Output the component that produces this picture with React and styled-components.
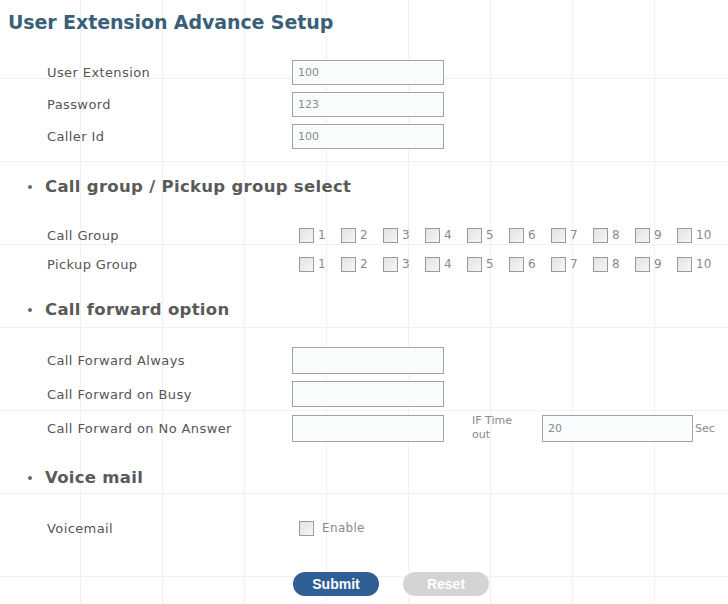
import React from "react";
import styled, { createGlobalStyle } from "styled-components";

const Global = createGlobalStyle`
  html, body { margin: 0; padding: 0; background: #fff; }
  body {
    font-family: "DejaVu Sans", Verdana, sans-serif;
    width: 728px; height: 604px; overflow: hidden;
  }
`;

const Page = styled.div`
  width: 728px;
  height: 604px;
  box-sizing: border-box;
  padding: 10px 0 0 8px;
  background-color: #fff;
  background-image:
    linear-gradient(to right, #f1f1f1 1px, transparent 1px),
    linear-gradient(to bottom, #f1f1f1 1px, transparent 1px);
  background-size: 82px 83px;
  background-position: -2px -5px;
`;

const Title = styled.h1`
  margin: 0;
  font-family: "DejaVu Sans", Verdana, sans-serif;
  font-weight: bold;
  font-size: 19px;
  line-height: 24px;
  color: #3a5f79;
  letter-spacing: -0.1px;
`;

const Section = styled.section`
  margin-top: ${(p) => p.$top}px;
`;

const Heading = styled.h2`
  margin: 0 0 0 20px;
  display: flex;
  align-items: center;
  font-family: "DejaVu Sans", Verdana, sans-serif;
  font-weight: bold;
  font-size: 16.5px;
  letter-spacing: 0.3px;
  line-height: 22px;
  color: #5a5a5a;
  &::before {
    content: "";
    width: 4px;
    height: 4px;
    border-radius: 50%;
    background: #6a6a6a;
    margin-right: 13px;
  }
`;

const Rows = styled.div`
  margin-top: ${(p) => p.$top}px;
  display: flex;
  flex-direction: column;
  gap: ${(p) => p.$gap}px;
`;

const Row = styled.div`
  display: grid;
  grid-template-columns: 245px auto;
  align-items: center;
  padding-left: 39px;
  min-height: ${(p) => p.$h || 25}px;
`;

const Label = styled.div`
  font-size: 13px;
  letter-spacing: 0.4px;
  color: #555;
`;

const Field = styled.div`
  display: flex;
  align-items: center;
`;

const TextInput = styled.input`
  box-sizing: border-box;
  width: ${(p) => p.$w || 152}px;
  height: ${(p) => p.$h || 25}px;
  border: 1px solid #a3a3a3;
  background: #f9fcfd;
  padding: 0 5px;
  font-family: "DejaVu Sans", Verdana, sans-serif;
  font-size: 11px;
  color: #8a8a8a;
  outline: none;
`;

const Checks = styled.div`
  display: flex;
  align-items: center;
  padding-left: 7px;
`;

const CheckItem = styled.label`
  display: flex;
  align-items: center;
  width: 42px;
  font-size: 12px;
  color: #8a8a8a;
`;

const Box = styled.span`
  box-sizing: border-box;
  width: 15px;
  height: 15px;
  border: 1px solid #9a9a9a;
  background: linear-gradient(135deg, #e2e2e2, #f7f7f7);
  margin-right: 4px;
  flex: none;
`;

const TimeoutLabel = styled.div`
  width: 44px;
  margin-left: 28px;
  margin-right: 26px;
  font-size: 11px;
  line-height: 14px;
  color: #8a8a8a;
`;

const Unit = styled.span`
  margin-left: 2px;
  font-size: 11px;
  color: #8a8a8a;
`;

const EnableText = styled.span`
  font-size: 12px;
  color: #8a8a8a;
  letter-spacing: 0.3px;
`;

const Buttons = styled.div`
  margin-top: 34px;
  display: flex;
  gap: 24px;
  padding-left: 285px;
`;

const Pill = styled.button`
  width: 86px;
  height: 24px;
  border: none;
  border-radius: 12px;
  background: ${(p) => (p.$primary ? "#2e5e93" : "#d4d4d4")};
  color: #fff;
  font-family: "Liberation Sans", Arial, sans-serif;
  font-weight: bold;
  font-size: 14px;
  padding: 0;
`;

const nums = [1, 2, 3, 4, 5, 6, 7, 8, 9, 10];

const CheckGroup = () => (
  <Checks>
    {nums.map((n) => (
      <CheckItem key={n}>
        <Box />
        {n}
      </CheckItem>
    ))}
  </Checks>
);

export default function App() {
  return (
    <>
      <Global />
      <Page>
        <Title>User Extension Advance Setup</Title>

        <Rows $top={26} $gap={7}>
          <Row>
            <Label>User Extension</Label>
            <Field><TextInput defaultValue="100" /></Field>
          </Row>
          <Row>
            <Label>Password</Label>
            <Field><TextInput defaultValue="123" /></Field>
          </Row>
          <Row>
            <Label>Caller Id</Label>
            <Field><TextInput defaultValue="100" /></Field>
          </Row>
        </Rows>

        <Section $top={27}>
          <Heading>Call group / Pickup group select</Heading>
          <Rows $top={27} $gap={9}>
            <Row $h={20}>
              <Label>Call Group</Label>
              <CheckGroup />
            </Row>
            <Row $h={20}>
              <Label>Pickup Group</Label>
              <CheckGroup />
            </Row>
          </Rows>
        </Section>

        <Section $top={25}>
          <Heading>Call forward option</Heading>
          <Rows $top={26} $gap={7}>
            <Row $h={27}>
              <Label>Call Forward Always</Label>
              <Field><TextInput $h={27} /></Field>
            </Row>
            <Row $h={26}>
              <Label>Call Forward on Busy</Label>
              <Field><TextInput $h={26} /></Field>
            </Row>
            <Row $h={27}>
              <Label>Call Forward on No Answer</Label>
              <Field>
                <TextInput $h={27} />
                <TimeoutLabel>IF Time out</TimeoutLabel>
                <TextInput $h={27} $w={151} defaultValue="20" />
                <Unit>Sec</Unit>
              </Field>
            </Row>
          </Rows>
        </Section>

        <Section $top={25}>
          <Heading>Voice mail</Heading>
          <Rows $top={29} $gap={0}>
            <Row $h={20}>
              <Label>Voicemail</Label>
              <Checks>
                <Box />
                <EnableText>&nbsp;Enable</EnableText>
              </Checks>
            </Row>
          </Rows>
        </Section>

        <Buttons>
          <Pill $primary>Submit</Pill>
          <Pill>Reset</Pill>
        </Buttons>
      </Page>
    </>
  );
}
